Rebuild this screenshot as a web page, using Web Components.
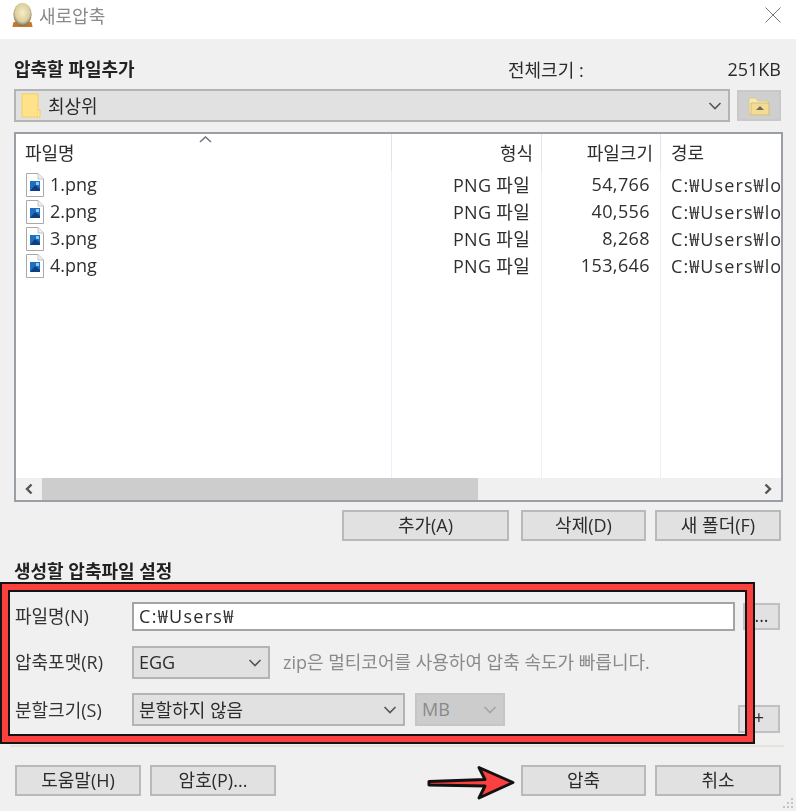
<!DOCTYPE html>
<html lang="ko">
<head>
<meta charset="utf-8">
<title>새로압축</title>
<style>
    html, body { margin: 0; padding: 0; background: #f0f0f0; }
    body { font-family: "Open Sans", "Noto Sans CJK KR", sans-serif; font-size: 18px; color: #2b2b2b; }
</style>
</head>
<body>
<zip-dialog></zip-dialog>

<script>
const CHEVRON = `<svg width="14" height="8" viewBox="0 0 14 8" fill="none"><path d="M1.5 1 L7 6.5 L12.5 1" stroke="currentColor" stroke-width="1.6"/></svg>`

class TitleBar extends HTMLElement{
    constructor(){
        super()
        const shadow = this.attachShadow({ mode: "open" })
        shadow.innerHTML = `
        <style>
            :host { display: flex; align-items: center; box-sizing: border-box; height: 39px; padding: 0 0 9px 12px; background: #fff; color: #8a8a8a; font-size: 18px; }
            svg.logo { margin-right: 6px; }
            .text { flex: 1; }
            svg.close { margin: 0 15px 0 0; }
        </style>
        <svg class="logo" width="21" height="24" viewBox="0 0 21 25">
            <defs><radialGradient id="egg" cx=".5" cy=".42" r=".6">
                <stop offset="0" stop-color="#f4edc8"/><stop offset=".65" stop-color="#dccf9b"/><stop offset="1" stop-color="#6b6450"/>
            </radialGradient></defs>
            <path d="M0 25 L1 20 L5 19 L16 19 L20 20 L21 25 Z" fill="#c9762b"/>
            <ellipse cx="10.5" cy="12" rx="9.5" ry="12" fill="url(#egg)"/>
        </svg>
        <span class="text"><slot></slot></span>
        <svg class="close" width="16" height="16" viewBox="0 0 16 16" fill="none"><path d="M.5 .5 L15.5 15.5 M15.5 .5 L.5 15.5" stroke="#777" stroke-width="1"/></svg>
        `
    }
}

class WinButton extends HTMLElement{
    constructor(){
        super()
        const shadow = this.attachShadow({ mode: "open" })
        shadow.innerHTML = `
        <style>
            :host { display: flex; align-items: center; justify-content: center; box-sizing: border-box; height: 31px; padding-bottom: 3px; background: #e1e1e1; border: 2px solid #b9b9b9; color: #2b2b2b; font-size: 18px; white-space: nowrap; overflow: hidden; }
        </style>
        <slot></slot>
        `
    }
}

class WinCombo extends HTMLElement{
    constructor(){
        super()
        const shadow = this.attachShadow({ mode: "open" })
        shadow.innerHTML = `
        <style>
            :host { display: flex; align-items: center; box-sizing: border-box; height: 33px; background: #e1e1e1; border: 2px solid #b4b4b4; padding: 0 6px 0 5px; font-size: 18px; color: #2b2b2b; }
            :host([disabled]) { background: #cccccc; border-color: #c6c6c6; color: #8a8a8a; }
            .value { flex: 1; display: flex; align-items: center; gap: 7px; white-space: nowrap; padding-bottom: 2px; }
            .arrow { display: flex; color: #555; }
            :host([disabled]) .arrow { color: #a4a4a4; }
            ::slotted(svg) { margin-top: 2px; }
        </style>
        <span class="value"><slot name="icon"></slot><slot></slot></span>
        <span class="arrow">${CHEVRON}</span>
        `
    }
}

class ListScrollbar extends HTMLElement{
    constructor(){
        super()
        const shadow = this.attachShadow({ mode: "open" })
        shadow.innerHTML = `
        <style>
            :host { display: flex; height: 22px; background: #f0f0f0; flex: none; }
            .btn { width: 26px; display: flex; align-items: center; justify-content: center; flex: none; }
            .track { flex: 1; display: flex; }
            .thumb { width: 436px; background: #cdcdcd; }
        </style>
        <div class="btn"><svg width="10" height="12" viewBox="0 0 10 12" fill="none"><path d="M7.5 1.5 L3 6 L7.5 10.5" stroke="#555" stroke-width="2.4"/></svg></div>
        <div class="track"><div class="thumb"></div></div>
        <div class="btn"><svg width="10" height="12" viewBox="0 0 10 12" fill="none"><path d="M2.5 1.5 L7 6 L2.5 10.5" stroke="#555" stroke-width="2.4"/></svg></div>
        `
    }
}

class FileList extends HTMLElement{
    constructor(){
        super()
        const files = [
            ["1.png", "54,766"],
            ["2.png", "40,556"],
            ["3.png", "8,268"],
            ["4.png", "153,646"]
        ]
        const fileIcon = `<svg width="18" height="24" viewBox="0 0 18 24"><path d="M.5 .5 H12 L17.5 6 V23.5 H.5 Z" fill="#fff" stroke="#a9a9a9"/><path d="M12 .5 V6 H17.5" fill="#eee" stroke="#c4c4c4"/><rect x="4" y="8" width="10" height="10" fill="#1f6fc0"/><path d="M4 18 L9 12 L14 16 V18 Z" fill="#0d3f82"/><rect x="10" y="9" width="3" height="3" fill="#8cc8ee"/></svg>`
        const shadow = this.attachShadow({ mode: "open" })
        shadow.innerHTML = `
        <style>
            :host { display: flex; flex-direction: column; box-sizing: border-box; height: 370px; border: 2px solid #9a9fa6; background: #fff; position: relative; font-size: 18px; color: #2f2f2f; }
            .cols { flex: 1; display: flex; min-height: 0; overflow: hidden; }
            .col { display: flex; flex-direction: column; box-sizing: border-box; border-right: 1px solid #e8f1fb; position: relative; }
            .col.name { width: 376px; }
            .col.type { width: 150px; text-align: right; }
            .col.size { width: 119px; text-align: right; }
            .col.path { flex: 1; border-right: 0; overflow: hidden; }
            .head { height: 37px; padding-bottom: 2px; box-sizing: border-box; display: flex; align-items: center; flex: none; }
            .col:not(.path)::after { content: ""; position: absolute; right: -1px; top: 0; width: 1px; height: 36px; background: #e4e4e4; }
            .name .head { padding-left: 9px; }
            .type .head { justify-content: flex-end; padding-right: 8px; }
            .size .head { justify-content: flex-end; padding-right: 7px; }
            .path .head { padding-left: 10px; }
            .cell { height: 27px; display: flex; align-items: center; white-space: nowrap; box-sizing: border-box; }
            .cell span, .type .cell, .size .cell, .path .cell { padding-bottom: 2px; }
            .name .cell { padding-left: 10px; gap: 6px; }
            .type .cell { justify-content: flex-end; padding-right: 11px; letter-spacing: .3px; }
            .size .cell { justify-content: flex-end; padding-right: 10px; letter-spacing: .4px; }
            .path .cell { padding-left: 10px; letter-spacing: 1.1px; }
            .sort { position: absolute; left: 183px; top: 2px; }
        </style>
        <div class="cols">
            <div class="col name"><div class="head">파일명</div>${files.map(f => `<div class="cell">${fileIcon}<span>${f[0]}</span></div>`).join("")}</div>
            <div class="col type"><div class="head">형식</div>${files.map(() => `<div class="cell">PNG 파일</div>`).join("")}</div>
            <div class="col size"><div class="head">파일크기</div>${files.map(f => `<div class="cell">${f[1]}</div>`).join("")}</div>
            <div class="col path"><div class="head">경로</div>${files.map(() => `<div class="cell">C:₩Users₩lo</div>`).join("")}</div>
        </div>
        <svg class="sort" width="13" height="7" viewBox="0 0 13 7" fill="none"><path d="M1 6 L6.5 1 L12 6" stroke="#777" stroke-width="1.6"/></svg>
        <list-scrollbar></list-scrollbar>
        `
    }
}

class RedFrame extends HTMLElement{
    constructor(){
        super()
        const shadow = this.attachShadow({ mode: "open" })
        shadow.innerHTML = `
        <style>
            :host { position: absolute; left: 0; top: 582px; width: 755px; height: 162px; box-sizing: border-box; border: 2px solid #141414; box-shadow: inset 0 0 0 6px #fb4040, inset 0 0 0 8px #141414; pointer-events: none; }
        </style>
        `
    }
}

class RedArrow extends HTMLElement{
    constructor(){
        super()
        const shadow = this.attachShadow({ mode: "open" })
        shadow.innerHTML = `
        <style>
            :host { position: absolute; left: 424px; top: 762px; width: 94px; height: 42px; }
            svg { display: block; }
        </style>
        <svg width="94" height="42" viewBox="0 0 94 42">
            <path d="M5 19.5 L61 17.5 L55 5.5 L89 20.5 L55 36 L61 24 L5 23 Z" fill="#fb4040" stroke="#111" stroke-width="3" stroke-linejoin="round"/>
        </svg>
        `
    }
}

class ZipDialog extends HTMLElement{
    constructor(){
        super()
        const shadow = this.attachShadow({ mode: "open" })
        shadow.innerHTML = `
        <style>
            :host { display: flex; flex-direction: column; position: relative; width: 796px; height: 811px; overflow: hidden; background: #f0f0f0; color: #2b2b2b; font-family: "Open Sans", "Noto Sans CJK KR", sans-serif; font-size: 18px; }
            main { display: flex; flex-direction: column; padding: 0 13px 0 14px; flex: 1; filter: blur(.35px); }
            title-bar { filter: blur(.35px); }
            h2 { margin: 0; font-size: 18px; font-weight: 700; line-height: 22px; color: #222; }
            .top-head { display: flex; align-items: center; height: 22px; margin-top: 19px; }
            .top-head h2 { flex: 1; }
            .total { width: 83px; white-space: nowrap; }
            .total-value { width: 190px; text-align: right; margin-right: 2px; }
            .path-row { display: flex; gap: 7px; margin-top: 9px; margin-right: 2px; }
            .path-row win-combo { flex: 1; }
            .path-row win-button { width: 44px; height: 31px; flex: none; padding-bottom: 0; background: #cfcfcf; border-color: #c9c9c9; margin-top: 1px; }
            .folder { display: block; }
            file-list { margin-top: 10px; }
            .list-actions { display: flex; justify-content: flex-end; gap: 9px; margin-top: 8px; margin-right: 2px; }
            .list-actions win-button:nth-child(1) { width: 167px; margin-right: 3px; }
            .list-actions win-button:nth-child(2) { width: 125px; }
            .list-actions win-button:nth-child(3) { width: 126px; }
            .settings-title { margin-top: 19px; height: 22px; }
            .form { display: flex; flex-direction: column; margin-top: 20px; }
            .row { display: flex; align-items: center; }
            .row label { width: 117px; margin-left: 1px; flex: none; white-space: nowrap; color: #333; padding-bottom: 4px; }
            .split label { padding-bottom: 2px; }
            .filename { height: 29px; }
            .input { box-sizing: border-box; width: 603px; height: 29px; border: 2px solid #a4a4a4; background: #fff; padding: 0 0 3px 5px; display: flex; align-items: center; white-space: nowrap; letter-spacing: 1.3px; }
            .browse { width: 37px; height: 27px; margin-left: 8px; background: #e1e1e1; border-color: #c0c0c0; }
            .format { margin-top: 15px; }
            .format win-combo { width: 138px; }
            .note { margin-left: 13px; color: #8a8a8a; font-size: 18px; white-space: nowrap; padding-bottom: 4px; }
            .split { margin-top: 14px; height: 33px; }
            .split win-combo:nth-of-type(1) { width: 273px; }
            .split win-combo:nth-of-type(2) { width: 90px; margin-left: 10px; }
            .plus { width: 42px; height: 28px; margin: 18px 3px 0 auto; background: #e1e1e1; border-color: #c0c0c0; }
            hr { border: 0; height: 2px; background: #e4e4da; margin: 19px -1px 0 -4px; }
            .actions { display: flex; gap: 9px; margin-top: 18px; margin-right: 2px; margin-left: 1px; }
            .actions win-button { width: 126px; }
            .actions win-button:nth-child(3) { margin-left: auto; width: 125px; }
            .grip { position: absolute; right: 2px; bottom: 2px; }
        </style>
        <title-bar>새로압축</title-bar>
        <main>
            <div class="top-head">
                <h2>압축할 파일추가</h2>
                <span class="total">전체크기 :</span>
                <span class="total-value">251KB</span>
            </div>
            <div class="path-row">
                <win-combo>
                    <svg slot="icon" width="20" height="25" viewBox="0 0 20 25"><rect x="1" y="1" width="16" height="23" fill="#ffe28a" stroke="#f4cf60"/><path d="M17 17 H19 V24 H17" fill="#ffe9a5" stroke="#f2cb5a"/></svg>
                    최상위
                </win-combo>
                <win-button>
                    <svg class="folder" width="22" height="20" viewBox="0 0 22 20"><path d="M1 2 H8 L10 5 H20 V18 H1 Z" fill="#f6e9b8" stroke="#d8c98e"/><path d="M3 7 H21 V19 H3 Z" fill="#f2dc92" stroke="#d3bd7c"/><path d="M12 10 L16 14 H8 Z" fill="#6b6b5f"/></svg>
                </win-button>
            </div>
            <file-list></file-list>
            <div class="list-actions">
                <win-button>추가(A)</win-button>
                <win-button>삭제(D)</win-button>
                <win-button>새 폴더(F)</win-button>
            </div>
            <h2 class="settings-title">생성할 압축파일 설정</h2>
            <div class="form">
                <div class="row filename">
                    <label>파일명(N)</label>
                    <div class="input">C:₩Users₩</div>
                    <win-button class="browse">...</win-button>
                </div>
                <div class="row format">
                    <label>압축포맷(R)</label>
                    <win-combo>EGG</win-combo>
                    <span class="note">zip은 멀티코어를 사용하여 압축 속도가 빠릅니다.</span>
                </div>
                <div class="row split">
                    <label>분할크기(S)</label>
                    <win-combo>분할하지 않음</win-combo>
                    <win-combo disabled>MB</win-combo>
                    <win-button class="plus">+</win-button>
                </div>
            </div>
            <hr>
            <div class="actions">
                <win-button>도움말(H)</win-button>
                <win-button>암호(P)...</win-button>
                <win-button>압축</win-button>
                <win-button>취소</win-button>
            </div>
        </main>
        <svg class="grip" width="11" height="11" viewBox="0 0 11 11" fill="#c4c4c4"><rect x="8" y="0" width="2" height="2"/><rect x="4" y="4" width="2" height="2"/><rect x="8" y="4" width="2" height="2"/><rect x="0" y="8" width="2" height="2"/><rect x="4" y="8" width="2" height="2"/><rect x="8" y="8" width="2" height="2"/></svg>
        <red-frame></red-frame>
        <red-arrow></red-arrow>
        `
    }
}

customElements.define('title-bar', TitleBar)
customElements.define('win-button', WinButton)
customElements.define('win-combo', WinCombo)
customElements.define('list-scrollbar', ListScrollbar)
customElements.define('file-list', FileList)
customElements.define('red-frame', RedFrame)
customElements.define('red-arrow', RedArrow)
customElements.define('zip-dialog', ZipDialog)
</script>
</body>
</html>
